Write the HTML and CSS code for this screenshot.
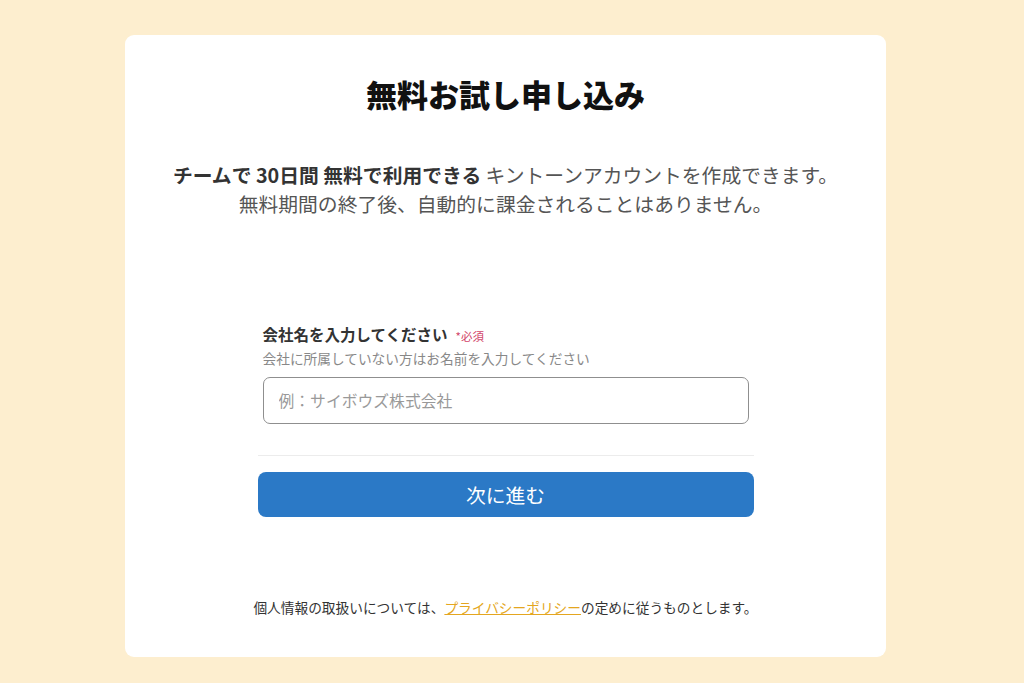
FILE: index.html
```html
<!DOCTYPE html>
<html lang="ja">
<head>
<meta charset="utf-8">
<title>無料お試し申し込み</title>
<link rel="stylesheet" href="styles.css">
</head>
<body>
<main class="card">
  <h1 class="title">無料お試し申し込み</h1>
  <p class="lead">
    <span class="lead-line"><b>チームで 30日間 無料で利用できる</b> キントーンアカウントを作成できます。</span>
    <span class="lead-line">無料期間の終了後、自動的に課金されることはありません。</span>
  </p>
  <form class="form">
    <div class="field">
      <label class="label" for="company">会社名を入力してください<span class="req">*必須</span></label>
      <div class="help">会社に所属していない方はお名前を入力してください</div>
      <input class="input" id="company" type="text" placeholder="例：サイボウズ株式会社">
    </div>
    <hr class="divider">
    <button class="btn" type="button">次に進む</button>
  </form>
  <p class="note">個人情報の取扱いについては、<a class="link" href="#">プライバシーポリシー</a>の定めに従うものとします。</p>
</main>
</body>
</html>
```
FILE: styles.css
```css
* { box-sizing: border-box; }
html, body { margin: 0; padding: 0; }
body {
  background: #fdeecf;
  font-family: "Noto Sans CJK JP", "Noto Sans", sans-serif;
  color: #333;
  height: 683px;
  overflow: hidden;
}
.card {
  width: 761px;
  height: 622px;
  margin: 35px 0 0 125px;
  background: #fff;
  border-radius: 9px;
  padding-top: 40px;
  display: flex;
  flex-direction: column;
  align-items: center;
}
.title {
  margin: 0;
  font-size: 31px;
  line-height: 38px;
  font-weight: 800;
  color: #111;
}
.lead {
  margin: 47px 0 0;
  font-size: 19.8px;
  line-height: 29px;
  color: #555;
  text-align: center;
  display: flex;
  flex-direction: column;
  align-items: center;
}
.lead b { color: #333; font-weight: 700; }
.form {
  width: 496px;
  margin-top: 105px;
}
.field { padding: 0 5px; }
.label {
  display: block;
  font-size: 15.5px;
  line-height: 22px;
  font-weight: 700;
  color: #333;
}
.req {
  margin-left: 8px;
  font-size: 11.5px;
  font-weight: 400;
  color: #d2456a;
}
.help {
  margin-top: 1px;
  font-size: 13.7px;
  line-height: 20px;
  color: #888;
}
.input {
  display: block;
  width: 100%;
  height: 47px;
  margin-top: 9px;
  border: 1px solid #8f8f8f;
  border-radius: 7px;
  padding: 0 15px;
  font-family: inherit;
  font-size: 15.8px;
  color: #333;
  outline: none;
}
.input::placeholder { color: #999; }
.divider {
  margin: 31px 0 0;
  border: 0;
  border-top: 1px solid #ececec;
}
.btn {
  display: block;
  width: 100%;
  height: 45px;
  margin-top: 16px;
  border: 0;
  border-radius: 8px;
  background: #2b79c6;
  color: #fff;
  font-family: inherit;
  font-size: 19.8px;
  line-height: 43px;
  cursor: pointer;
}
.note {
  margin: 80px 0 0;
  font-size: 13.7px;
  line-height: 20px;
  color: #333;
}
.link {
  color: #e4a620;
  text-decoration: underline;
}
```
